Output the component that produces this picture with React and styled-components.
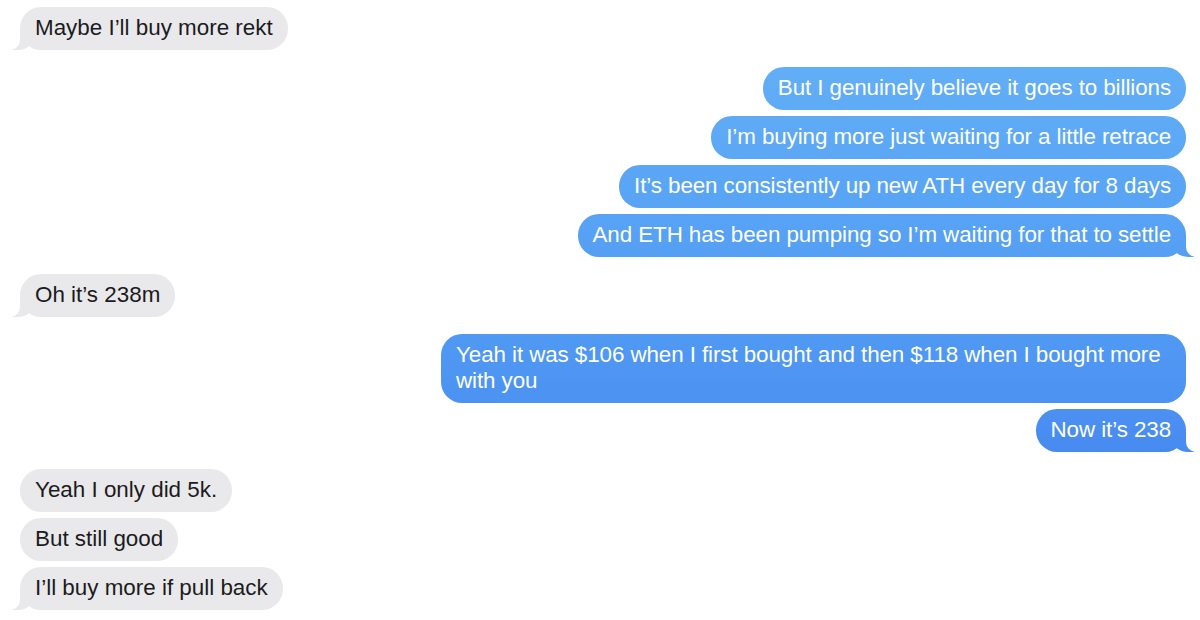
import React from "react";
import styled, { createGlobalStyle, css } from "styled-components";

const Global = createGlobalStyle`
  html, body { margin: 0; padding: 0; background: #ffffff; }
  body { font-family: "Liberation Sans", Arial, sans-serif; -webkit-font-smoothing: antialiased; }
`;

const Thread = styled.div`
  width: 1200px;
  box-sizing: border-box;
  padding: 7px 14px 0 20px;
  display: flex;
  flex-direction: column;
  gap: 17px;
`;

const Group = styled.div`
  display: flex;
  flex-direction: column;
  gap: 6px;
  align-items: ${(p) => (p.$me ? "flex-end" : "flex-start")};
`;

const Bubble = styled.div`
  position: relative;
  z-index: 0;
  box-sizing: border-box;
  max-width: 745px;
  padding: 8px 15px 9px 15px;
  border-radius: 21px;
  font-size: 22.4px;
  line-height: 26px;
  letter-spacing: ${(p) => (p.$me ? "-0.09px" : "0")};
  color: ${(p) => (p.$me ? "#ffffff" : "#1b1b1d")};
  background: ${(p) =>
    p.$me
      ? "linear-gradient(180deg, #66b3f7 0px, #5aa6f5 180px, #4d95f2 380px, #4789f0 460px) fixed"
      : "#e9e9eb"};

  ${(p) =>
    p.$tail &&
    css`
      &::before {
        content: "";
        position: absolute;
        z-index: -1;
        bottom: 0;
        ${p.$me ? "right: -8px;" : "left: -8px;"}
        width: 22px;
        height: 22px;
        background: inherit;
        ${p.$me
          ? "border-bottom-left-radius: 16px 14px;"
          : "border-bottom-right-radius: 16px 14px;"}
      }
      &::after {
        content: "";
        position: absolute;
        z-index: -1;
        bottom: 0;
        ${p.$me ? "right: -10px;" : "left: -10px;"}
        width: 10px;
        height: 22px;
        background: #ffffff;
        ${p.$me
          ? "border-bottom-left-radius: 10px;"
          : "border-bottom-right-radius: 10px;"}
      }
    `}
`;

const groups = [
  { me: false, msgs: ["Maybe I\u2019ll buy more rekt"] },
  {
    me: true,
    msgs: [
      "But I genuinely believe it goes to billions",
      "I\u2019m buying more just waiting for a little retrace",
      "It\u2019s been consistently up new ATH every day for 8 days",
      "And ETH has been pumping so I\u2019m waiting for that to settle",
    ],
  },
  { me: false, msgs: ["Oh it\u2019s 238m"] },
  {
    me: true,
    msgs: [
      "Yeah it was $106 when I first bought and then $118 when I bought more with you",
      "Now it\u2019s 238",
    ],
  },
  {
    me: false,
    msgs: ["Yeah I only did 5k.", "But still good", "I\u2019ll buy more if pull back"],
  },
];

export default function App() {
  return (
    <>
      <Global />
      <Thread>
        {groups.map((g, gi) => (
          <Group key={gi} $me={g.me}>
            {g.msgs.map((m, mi) => (
              <Bubble key={mi} $me={g.me} $tail={mi === g.msgs.length - 1}>
                {m}
              </Bubble>
            ))}
          </Group>
        ))}
      </Thread>
    </>
  );
}
